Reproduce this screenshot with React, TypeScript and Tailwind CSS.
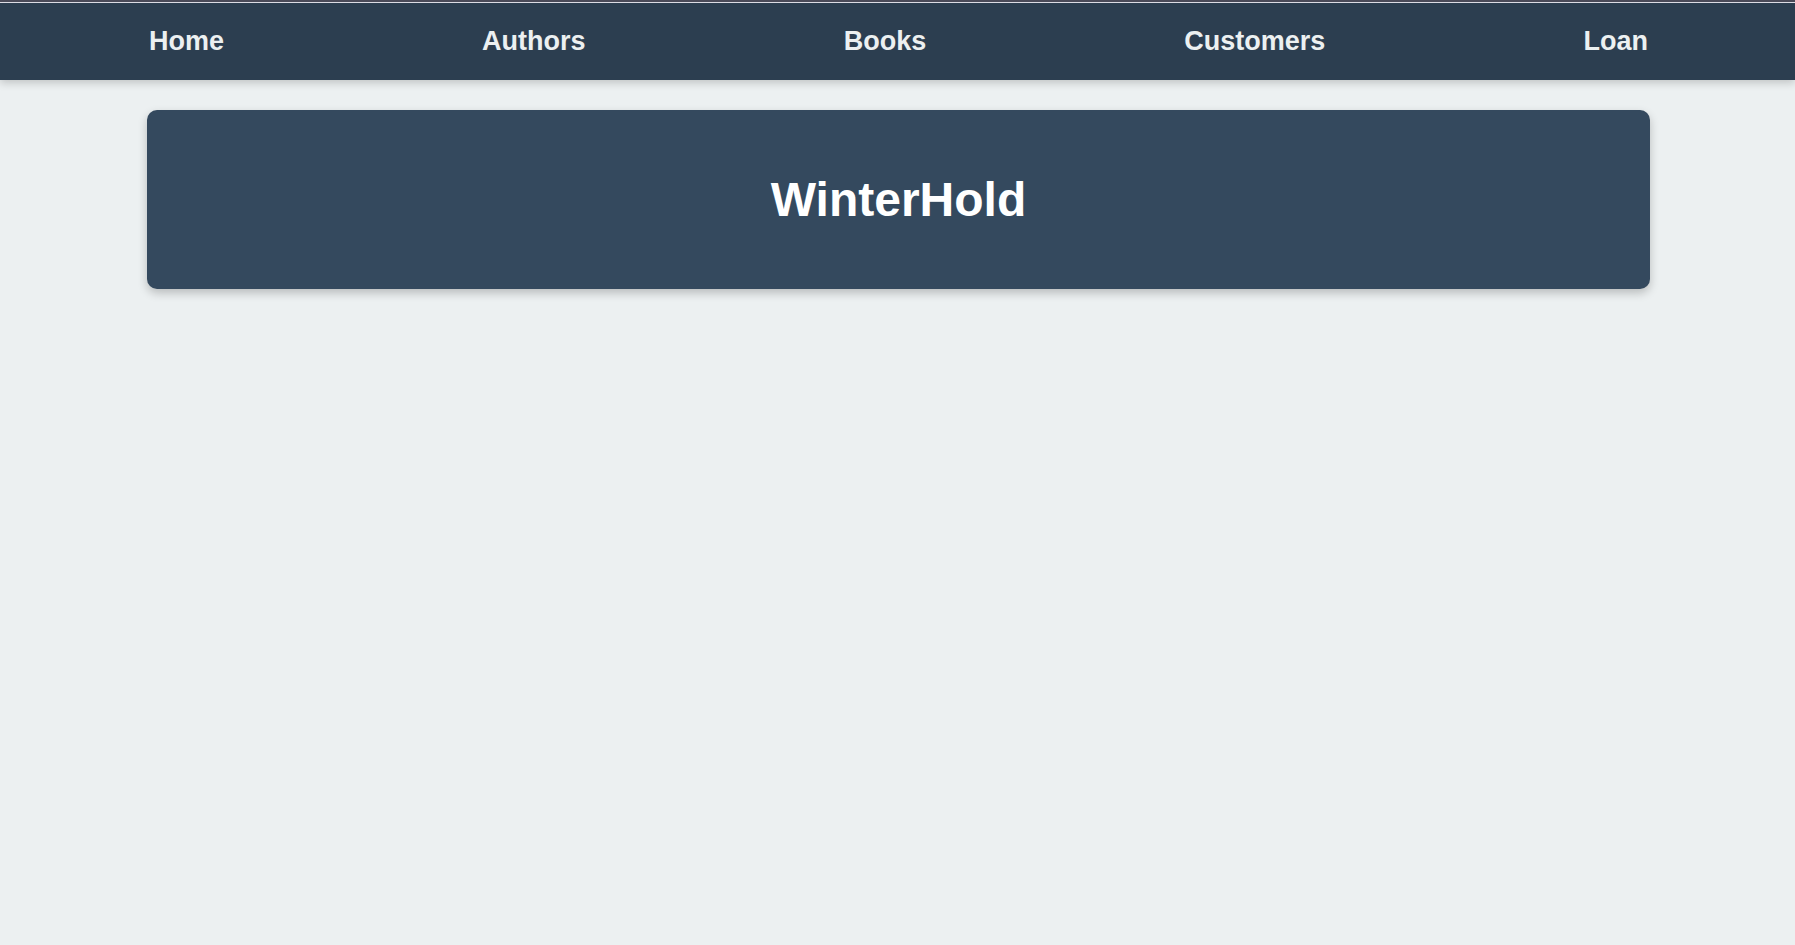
import React from "react";

export default function App() {
  const links = ["Home", "Authors", "Books", "Customers", "Loan"];
  return (
    <div
      className="min-h-[945px] w-full bg-[#ecf0f1]"
      style={{ fontFamily: '"Liberation Sans", Arial, sans-serif' }}
    >
      <div className="relative z-10 shadow-[0_3px_8px_rgba(0,0,0,0.18)]">
        <div className="h-[2px] bg-[#4a4a58]" />
        <div className="h-[1px] bg-[#dcdce4]" />
        <nav className="h-[77px] bg-[#2c3e50]">
          <ul className="ml-[147px] flex h-full w-[1503px] items-center justify-between pt-[2px] pl-[2px] pr-[2px]">
            {links.map((l) => (
              <li key={l}>
                <a className="text-[27px] font-bold text-[#ecf0f1] leading-none">{l}</a>
              </li>
            ))}
          </ul>
        </nav>
      </div>
      <main className="ml-[147px] mt-[30px] w-[1503px]">
        <div className="flex h-[179px] items-center justify-center rounded-[10px] bg-[#34495e] shadow-[0_4px_10px_rgba(0,0,0,0.22)]">
          <h1 className="text-[48px] font-bold leading-none text-white">WinterHold</h1>
        </div>
      </main>
    </div>
  );
}
